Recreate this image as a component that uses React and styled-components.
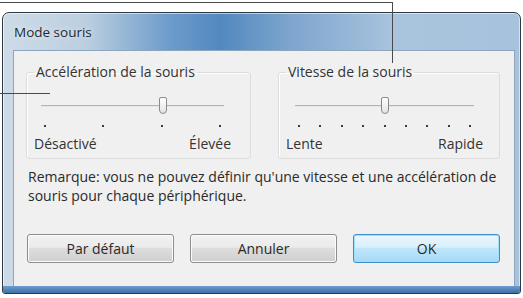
import React from 'react';
import styled, { createGlobalStyle } from 'styled-components';

const GlobalStyle = createGlobalStyle`
  html, body {
    margin: 0;
    padding: 0;
    background: #ffffff;
    width: 523px;
    height: 298px;
    overflow: hidden;
  }
  body {
    font-family: "Open Sans", "Noto Sans", sans-serif;
    font-size: 14px;
    color: #2b2b2b;
  }
`;

const Page = styled.div`
  position: relative;
  width: 523px;
  height: 298px;
  padding: 12px 2px 0 2px;
  box-sizing: border-box;
`;

// callout lines drawn over the screenshot
const Callout = styled.div`
  position: absolute;
  background: #4a4a4a;
  z-index: 5;
`;

const Window = styled.div`
  display: flex;
  flex-direction: column;
  width: 519px;
  height: 282px;
  box-sizing: border-box;
  border: 1px solid #2f3a45;
  border-radius: 7px 7px 3px 3px;
  background:
    linear-gradient(90deg, #cddbe7 0%, #bccfe0 16%, #6e9ccb 32%, #5189bf 42%, #7fa6ce 56%, #a9c4dd 76%, #a7c2dc 100%);
  box-shadow: inset 0 0 0 1px rgba(255, 255, 255, 0.55);
  overflow: hidden;
`;

const TitleBar = styled.div`
  height: 37px;
  flex: none;
  display: flex;
  align-items: center;
  padding: 1px 0 0 11px;
  box-sizing: border-box;
  font-size: 13.5px;
  color: #1e2a36;
  text-shadow: 0 0 6px rgba(255, 255, 255, 0.8);
`;

const Client = styled.div`
  flex: 1;
  margin: 0 5px 0 10px;
  background: #f0f0f0;
  border: 1px solid #8ea6bd;
  border-bottom: none;
  display: flex;
  flex-direction: column;
  padding: 12px 14px 0 12px;
  box-sizing: border-box;
`;

const BottomFrame = styled.div`
  height: 7px;
  flex: none;
  margin: 0 -1px;
  background: linear-gradient(180deg, #6e9ccd, #3d6ea6);
`;

const Groups = styled.div`
  display: flex;
  gap: 27px;
`;

const Group = styled.fieldset`
  flex: 1;
  margin: 0;
  height: 96px;
  box-sizing: border-box;
  border: 1px solid #dcdcdc;
  border-radius: 3px;
  box-shadow: 1px 1px 0 #ffffff inset;
  padding: 0 ${p => p.$padRight}px 0 7px;
  display: flex;
  flex-direction: column;
`;

const Legend = styled.legend`
  padding: 0 2px;
  margin-left: 0;
  font-size: 14px;
  color: #333;
  line-height: 18px;
`;

const SliderArea = styled.div`
  position: relative;
  height: 22px;
  margin: 14px ${p => p.$inset}px 0 ${p => p.$inset}px;
`;

const Track = styled.div`
  position: absolute;
  left: 0;
  right: 0;
  top: 10px;
  height: 1px;
  background: #b4b4b4;
  border-bottom: 1px solid #e6e6e6;
`;

const Thumb = styled.div`
  position: absolute;
  top: 2px;
  width: 8px;
  height: 17px;
  margin-left: -4px;
  box-sizing: border-box;
  border: 1px solid #8a8a8a;
  border-radius: 2px 2px 4px 4px;
  background: linear-gradient(180deg, #ffffff, #e3e3e3);
`;

const Ticks = styled.div`
  display: flex;
  justify-content: space-between;
  margin: 8px ${p => p.$inset}px 0 ${p => p.$inset}px;
  height: 4px;
`;

const Tick = styled.span`
  width: 2px;
  height: 2px;
  background: #3a3a3a;
`;

const Labels = styled.div`
  display: flex;
  justify-content: space-between;
  margin-top: 5px;
  font-size: 14px;
  color: #333;
`;

const Remark = styled.p`
  margin: 8px 0 0 2px;
  font-size: 14px;
  line-height: 19px;
  color: #2a2a2a;
`;

const Buttons = styled.div`
  display: flex;
  gap: 16px;
  margin: 29px 0 0 1px;
`;

const Button = styled.button`
  width: 148px;
  height: 29px;
  font-family: inherit;
  font-size: 14px;
  color: #2a2a2a;
  border: 1px solid ${p => (p.$primary ? '#3c8fc8' : '#8d8d8d')};
  border-radius: 3px;
  background: ${p =>
    p.$primary
      ? 'linear-gradient(180deg, #eaf6fd 0%, #d9f0fc 45%, #bee6fd 50%, #a7d9f5 100%)'
      : 'linear-gradient(180deg, #f2f2f2 0%, #ebebeb 45%, #dddddd 50%, #cfcfcf 100%)'};
  box-shadow: inset 0 0 0 1px ${p => (p.$primary ? '#9fe0fb' : '#fcfcfc')};
  padding: 0;
`;

function Slider({ count, value, inset }) {
  const ticks = Array.from({ length: count });
  return (
    <>
      <SliderArea $inset={inset}>
        <Track />
        <Thumb style={{ left: `${(value / (count - 1)) * 100}%` }} />
      </SliderArea>
      <Ticks $inset={inset + 3}>
        {ticks.map((_, i) => (
          <Tick key={i} />
        ))}
      </Ticks>
    </>
  );
}

export default function App() {
  return (
    <Page>
      <GlobalStyle />
      <Callout style={{ left: 0, top: 2, width: 393, height: 1 }} />
      <Callout style={{ left: 392, top: 2, width: 1, height: 61 }} />
      <Callout style={{ left: 0, top: 93, width: 50, height: 1 }} />
      <Window>
        <TitleBar>Mode souris</TitleBar>
        <Client>
          <Groups>
            <Group $padRight={19}>
              <Legend>Accélération de la souris</Legend>
              <Slider count={4} value={2} inset={7} />
              <Labels>
                <span>Désactivé</span>
                <span>Élevée</span>
              </Labels>
            </Group>
            <Group $padRight={16}>
              <Legend>Vitesse de la souris</Legend>
              <Slider count={9} value={4} inset={9} />
              <Labels>
                <span>Lente</span>
                <span>Rapide</span>
              </Labels>
            </Group>
          </Groups>
          <Remark>
            Remarque: vous ne pouvez définir qu'une vitesse et une accélération de
            <br />
            souris pour chaque périphérique.
          </Remark>
          <Buttons>
            <Button>Par défaut</Button>
            <Button>Annuler</Button>
            <Button $primary>OK</Button>
          </Buttons>
        </Client>
        <BottomFrame />
      </Window>
    </Page>
  );
}
